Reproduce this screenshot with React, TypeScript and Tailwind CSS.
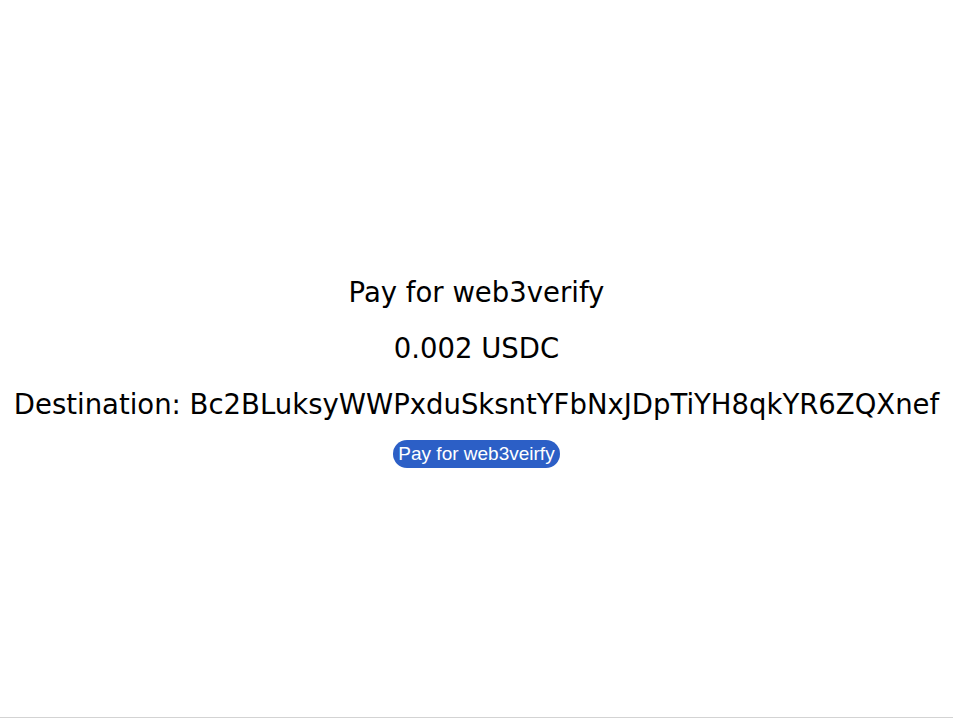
import React from "react";

export default function App() {
  return (
    <div className="h-[718px] w-full border-b border-[#d3d3d3] bg-white flex flex-col items-center justify-center">
      <div className="flex flex-col items-center text-black pt-[14px]" style={{ fontFamily: '"DejaVu Sans", "Noto Sans CJK JP", sans-serif' }}>
        <p className="text-[27.5px] leading-[56px] whitespace-nowrap">Pay for web3verify</p>
        <p className="text-[27.5px] leading-[56px] whitespace-nowrap">0.002 USDC</p>
        <p className="text-[27.5px] leading-[56px] whitespace-nowrap">Destination: Bc2BLuksyWWPxduSksntYFbNxJDpTiYH8qkYR6ZQXnef</p>
        <button className="mt-[8px] h-[28px] px-[5px] rounded-full bg-[#2c5fc6] text-white text-[19px] leading-none" style={{ fontFamily: '"Liberation Sans", Arial, sans-serif' }}>
          Pay for web3veirfy
        </button>
      </div>
    </div>
  );
}
